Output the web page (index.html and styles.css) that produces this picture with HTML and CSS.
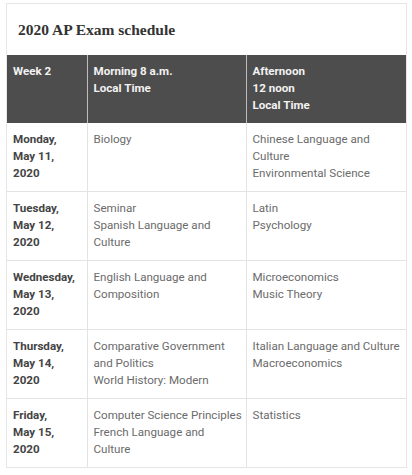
FILE: index.html
```html
<!DOCTYPE html>
<html>
<head>
<meta charset="utf-8">
<link rel="stylesheet" href="styles.css">
</head>
<body>
<div class="card">
  <div class="title">2020 AP Exam schedule</div>
  <table class="sched">
    <colgroup><col class="c1"><col class="c2"><col class="c3"></colgroup>
    <thead>
      <tr><th>Week 2</th><th>Morning 8 a.m.<br>Local Time</th><th>Afternoon<br>12 noon<br>Local Time</th></tr>
    </thead>
    <tbody>
      <tr><td class="day">Monday,<br>May 11,<br>2020</td><td>Biology</td><td>Chinese Language and Culture<br>Environmental Science</td></tr>
      <tr><td class="day">Tuesday,<br>May 12,<br>2020</td><td>Seminar<br>Spanish Language and Culture</td><td>Latin<br>Psychology</td></tr>
      <tr><td class="day">Wednesday,<br>May 13,<br>2020</td><td>English Language and Composition</td><td>Microeconomics<br>Music Theory</td></tr>
      <tr><td class="day">Thursday,<br>May 14,<br>2020</td><td>Comparative Government and Politics<br>World History: Modern</td><td>Italian Language and Culture<br>Macroeconomics</td></tr>
      <tr><td class="day">Friday,<br>May 15,<br>2020</td><td>Computer Science Principles<br>French Language and Culture</td><td>Statistics</td></tr>
    </tbody>
  </table>
</div>
</body>
</html>
```
FILE: styles.css
```css
html, body { margin: 0; padding: 0; background: #fff; }
body { font-family: Roboto, "Liberation Sans", sans-serif; }
.card {
  margin: 3px 0 0 6px;
  width: 401px;
  border: 1px solid #e6e6e6;
  box-sizing: border-box;
}
.title {
  font-family: "Liberation Serif", serif;
  font-weight: bold;
  font-size: 15.5px;
  color: #333;
  padding: 17px 11px 0 11px;
  height: 51px;
  box-sizing: border-box;
}
.sched {
  width: 100%;
  border-collapse: collapse;
  table-layout: fixed;
  font-size: 11.6px;
  line-height: 17px;
}
.c1 { width: 80px; }
.c2 { width: 159px; }
.sched th, .sched td {
  text-align: left;
  vertical-align: top;
  padding: 8px 2px 9px 6px;
}
.sched th {
  background: #4d4d4d;
  color: #f2f2f2;
  font-weight: bold;
  border-left: 1px solid #bdbdbd;
}
.sched th:first-child { border-left: none; }
.sched td {
  color: #6b6b6b;
  border-top: 1px solid #e3e3e3;
  border-left: 1px solid #e3e3e3;
}
.sched td:first-child { border-left: none; }
.sched thead tr:first-child th { border-top: none; }
.sched tbody tr:first-child td { border-top: none; }
.sched td.day { color: #444; font-weight: bold; }
```
